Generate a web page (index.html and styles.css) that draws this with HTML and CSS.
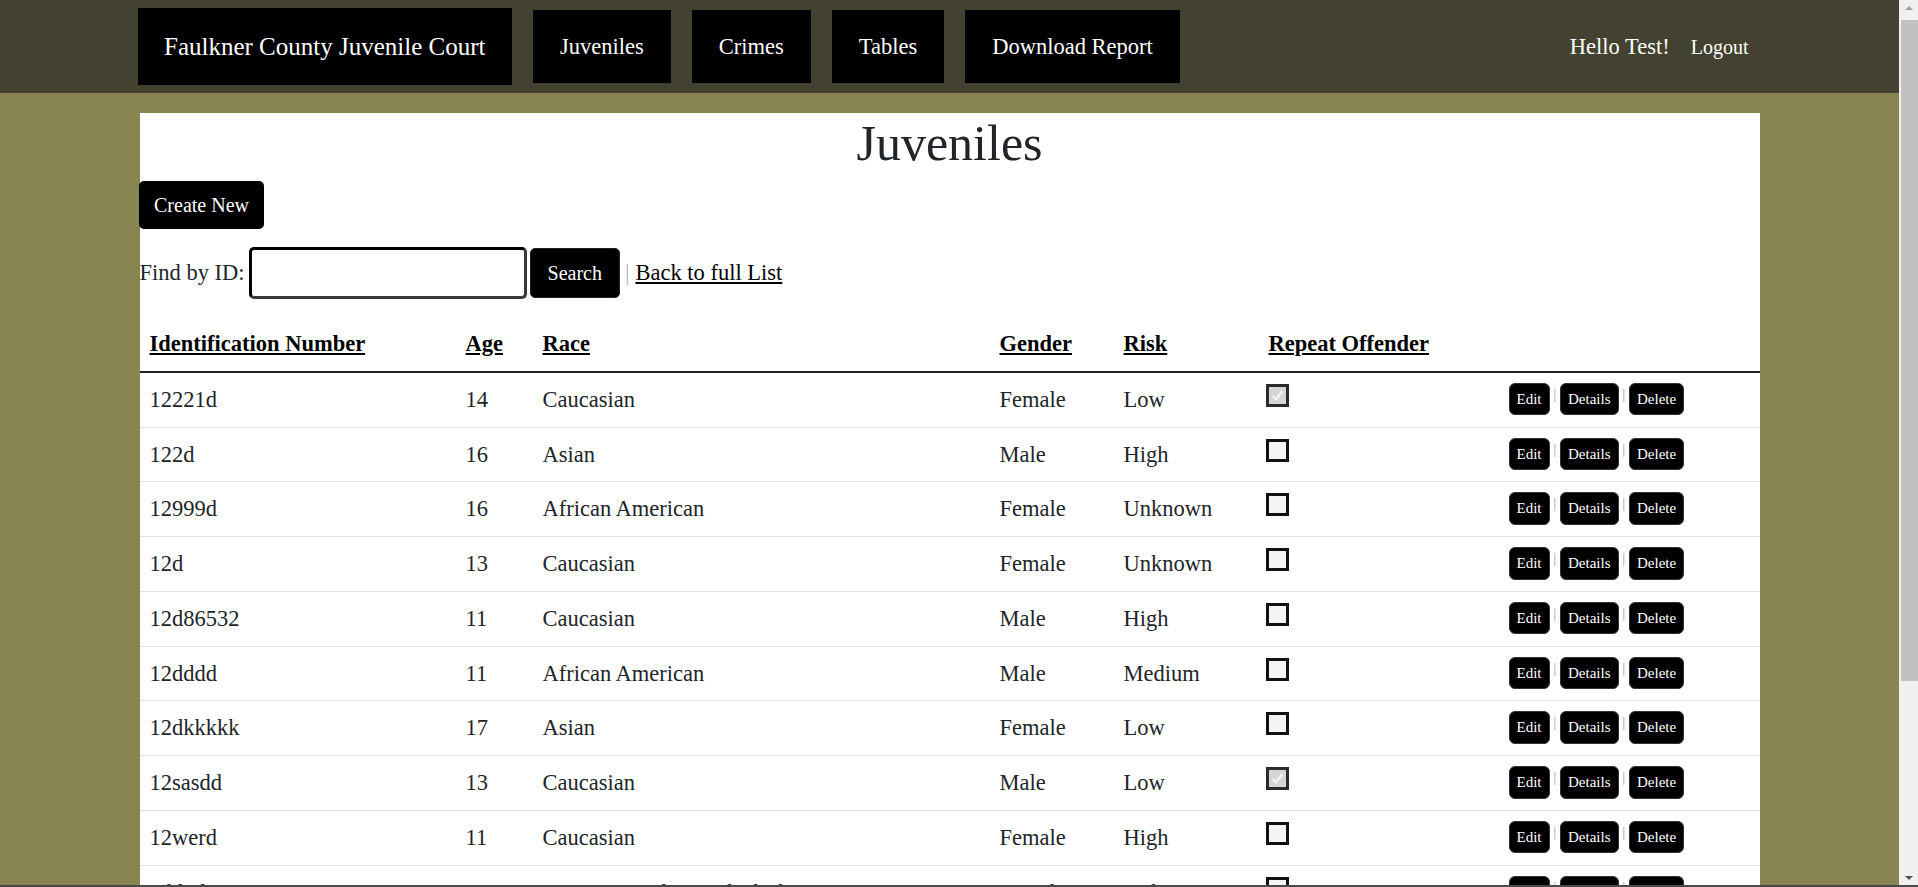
FILE: index.html
```html
<!DOCTYPE html>
<html lang="en">
<head>
<meta charset="utf-8">
<title>Juveniles - Faulkner County Juvenile Court</title>
<link rel="stylesheet" href="styles.css">
</head>
<body>
<header class="navbar">
  <div class="nav-inner">
    <a class="brand" href="#">Faulkner County Juvenile Court</a>
    <nav class="nav-links">
      <a class="nav-item" href="#">Juveniles</a>
      <a class="nav-item" href="#">Crimes</a>
      <a class="nav-item" href="#">Tables</a>
      <a class="nav-item" href="#">Download Report</a>
    </nav>
    <div class="nav-right">
      <span class="hello">Hello Test!</span>
      <button class="logout" type="button">Logout</button>
    </div>
  </div>
</header>

<main class="page">
  <h1 class="title">Juveniles</h1>
  <p class="create-row"><a class="btn-create" href="#">Create New</a></p>
  <form class="find-row">
    <label class="find-label" for="fid">Find by ID:</label>
    <input id="fid" class="find-input" type="text">
    <button class="btn-search" type="button">Search</button>
    <span class="sep-big">|</span>
    <a class="back-link" href="#">Back to full List</a>
  </form>

  <table class="grid">
    <colgroup>
      <col class="c-id"><col class="c-age"><col class="c-race"><col class="c-gender"><col class="c-risk"><col class="c-repeat"><col class="c-actions">
    </colgroup>
    <thead>
      <tr>
        <th><a href="#">Identification Number</a></th>
        <th><a href="#">Age</a></th>
        <th><a href="#">Race</a></th>
        <th><a href="#">Gender</a></th>
        <th><a href="#">Risk</a></th>
        <th><a href="#">Repeat Offender</a></th>
        <th></th>
      </tr>
    </thead>
    <tbody>
      <tr><td>12221d</td><td>14</td><td>Caucasian</td><td>Female</td><td>Low</td><td><span class="cb checked"><svg viewBox="0 0 16 16" class="tick"><path d="M3.5 8.5 L6.5 11.5 L12.5 4" fill="none" stroke="#f4f4f4" stroke-width="2"/></svg></span></td><td class="actions"><a class="btn-sm" href="#">Edit</a> <span class="sep">|</span> <a class="btn-sm" href="#">Details</a> <span class="sep">|</span> <a class="btn-sm" href="#">Delete</a></td></tr>
      <tr><td>122d</td><td>16</td><td>Asian</td><td>Male</td><td>High</td><td><span class="cb"></span></td><td class="actions"><a class="btn-sm" href="#">Edit</a> <span class="sep">|</span> <a class="btn-sm" href="#">Details</a> <span class="sep">|</span> <a class="btn-sm" href="#">Delete</a></td></tr>
      <tr><td>12999d</td><td>16</td><td>African American</td><td>Female</td><td>Unknown</td><td><span class="cb"></span></td><td class="actions"><a class="btn-sm" href="#">Edit</a> <span class="sep">|</span> <a class="btn-sm" href="#">Details</a> <span class="sep">|</span> <a class="btn-sm" href="#">Delete</a></td></tr>
      <tr><td>12d</td><td>13</td><td>Caucasian</td><td>Female</td><td>Unknown</td><td><span class="cb"></span></td><td class="actions"><a class="btn-sm" href="#">Edit</a> <span class="sep">|</span> <a class="btn-sm" href="#">Details</a> <span class="sep">|</span> <a class="btn-sm" href="#">Delete</a></td></tr>
      <tr><td>12d86532</td><td>11</td><td>Caucasian</td><td>Male</td><td>High</td><td><span class="cb"></span></td><td class="actions"><a class="btn-sm" href="#">Edit</a> <span class="sep">|</span> <a class="btn-sm" href="#">Details</a> <span class="sep">|</span> <a class="btn-sm" href="#">Delete</a></td></tr>
      <tr><td>12dddd</td><td>11</td><td>African American</td><td>Male</td><td>Medium</td><td><span class="cb"></span></td><td class="actions"><a class="btn-sm" href="#">Edit</a> <span class="sep">|</span> <a class="btn-sm" href="#">Details</a> <span class="sep">|</span> <a class="btn-sm" href="#">Delete</a></td></tr>
      <tr><td>12dkkkkk</td><td>17</td><td>Asian</td><td>Female</td><td>Low</td><td><span class="cb"></span></td><td class="actions"><a class="btn-sm" href="#">Edit</a> <span class="sep">|</span> <a class="btn-sm" href="#">Details</a> <span class="sep">|</span> <a class="btn-sm" href="#">Delete</a></td></tr>
      <tr><td>12sasdd</td><td>13</td><td>Caucasian</td><td>Male</td><td>Low</td><td><span class="cb checked"><svg viewBox="0 0 16 16" class="tick"><path d="M3.5 8.5 L6.5 11.5 L12.5 4" fill="none" stroke="#f4f4f4" stroke-width="2"/></svg></span></td><td class="actions"><a class="btn-sm" href="#">Edit</a> <span class="sep">|</span> <a class="btn-sm" href="#">Details</a> <span class="sep">|</span> <a class="btn-sm" href="#">Delete</a></td></tr>
      <tr><td>12werd</td><td>11</td><td>Caucasian</td><td>Female</td><td>High</td><td><span class="cb"></span></td><td class="actions"><a class="btn-sm" href="#">Edit</a> <span class="sep">|</span> <a class="btn-sm" href="#">Details</a> <span class="sep">|</span> <a class="btn-sm" href="#">Delete</a></td></tr>
      <tr><td>1dd2d</td><td>18</td><td>American Indian and Alaska Native</td><td>Female</td><td>Unknown</td><td><span class="cb"></span></td><td class="actions"><a class="btn-sm" href="#">Edit</a> <span class="sep">|</span> <a class="btn-sm" href="#">Details</a> <span class="sep">|</span> <a class="btn-sm" href="#">Delete</a></td></tr>
      <tr><td>23abc</td><td>15</td><td>Hispanic</td><td>Male</td><td>Medium</td><td><span class="cb"></span></td><td class="actions"><a class="btn-sm" href="#">Edit</a> <span class="sep">|</span> <a class="btn-sm" href="#">Details</a> <span class="sep">|</span> <a class="btn-sm" href="#">Delete</a></td></tr>
      <tr><td>3452d</td><td>14</td><td>Asian</td><td>Female</td><td>Low</td><td><span class="cb"></span></td><td class="actions"><a class="btn-sm" href="#">Edit</a> <span class="sep">|</span> <a class="btn-sm" href="#">Details</a> <span class="sep">|</span> <a class="btn-sm" href="#">Delete</a></td></tr>
      <tr><td>45tt</td><td>16</td><td>Caucasian</td><td>Male</td><td>High</td><td><span class="cb"></span></td><td class="actions"><a class="btn-sm" href="#">Edit</a> <span class="sep">|</span> <a class="btn-sm" href="#">Details</a> <span class="sep">|</span> <a class="btn-sm" href="#">Delete</a></td></tr>
    </tbody>
  </table>
</main>

<div class="fake-scrollbar" aria-hidden="true">
  <span class="sb-arrow up"></span>
  <span class="sb-thumb"></span>
  <span class="sb-arrow down"></span>
</div>
<div class="frame-edge"></div>
</body>
</html>
```

FILE: styles.css
```css
html {
  scrollbar-width: none;
}
html::-webkit-scrollbar {
  display: none;
}
body {
  margin: 0;
  padding-right: 19px;
  background: #888552;
  font-family: "Liberation Serif", "Times New Roman", serif;
  font-size: 22.5px;
  line-height: 1.5;
  color: #212529;
}
a {
  color: inherit;
}

/* navbar */
.navbar {
  background: #434230;
  height: 93px;
}
.nav-inner {
  width: 1624px;
  height: 93px;
  margin: 0 auto;
  display: flex;
  align-items: center;
  gap: 21px;
}
.brand {
  background: #000;
  color: #fff;
  text-decoration: none;
  font-size: 25px;
  line-height: 37.5px;
  padding: 20px 26.5px;
}
.nav-links {
  display: flex;
  gap: 21px;
}
.nav-item {
  background: #000;
  color: #fff;
  text-decoration: none;
  font-size: 22.5px;
  line-height: 33.75px;
  padding: 20px 27px;
}
.nav-right {
  margin-left: auto;
  display: flex;
  align-items: center;
  gap: 21px;
  padding-right: 13px;
  color: #fff;
}
.hello {
  font-size: 22.5px;
  line-height: 33.75px;
}
.logout {
  background: none;
  border: 0;
  padding: 0;
  color: #fff;
  font-family: inherit;
  font-size: 20px;
  line-height: 30px;
}

/* page */
.page {
  width: 1620px;
  margin: 20px auto 0;
  background: #fff;
  min-height: 1100px;
}
.title {
  margin: 0 0 8px;
  text-align: center;
  font-weight: normal;
  font-size: 50px;
  line-height: 60px;
}
.create-row {
  margin: 0 0 18px;
  line-height: 0;
}
.btn-create {
  display: inline-block;
  background: #000;
  color: #fff;
  text-decoration: none;
  font-size: 20px;
  line-height: 30px;
  padding: 9px 15.5px;
  border-radius: 5px;
  margin-left: -1px;
}
.find-row {
  margin: 0 0 18px;
  display: flex;
  align-items: center;
  height: 52px;
}
.find-label {
  margin-right: 4px;
}
.find-input {
  box-sizing: border-box;
  width: 278px;
  height: 52px;
  border: 3px solid #000;
  border-right-color: #3a3a3a;
  border-bottom-color: #3a3a3a;
  border-radius: 5px;
  font-size: 20px;
  font-family: inherit;
  margin: 0 3px 0 0;
}
.btn-search {
  height: 50px;
  background: #000;
  color: #fff;
  border: 1px solid #222;
  border-radius: 5px;
  font-family: inherit;
  font-size: 20px;
  padding: 0 17px;
}
.sep-big {
  color: #a9b6c4;
  margin: 0 6px 0 5px;
}
.back-link {
  color: #000;
}

/* table */
.grid {
  width: 100%;
  border-collapse: collapse;
  table-layout: fixed;
}
.c-id { width: 316px; }
.c-age { width: 77px; }
.c-race { width: 457px; }
.c-gender { width: 124px; }
.c-risk { width: 145px; }
.c-repeat { width: 240px; }
.c-actions { width: 261px; }
.grid th {
  text-align: left;
  padding: 10px;
  border-bottom: 2px solid #222;
  vertical-align: bottom;
}
.grid th a {
  color: #000;
}
.grid td {
  padding: 10px;
  border-bottom: 1px solid #dee2e6;
  vertical-align: top;
  white-space: nowrap;
}
.cb {
  display: inline-block;
  box-sizing: border-box;
  width: 23px;
  height: 23px;
  border: 3px solid #111;
  background: #f4f4f4;
  margin-left: -3px;
  position: relative;
}
.cb.checked {
  background: #d6d6d6;
  border-color: #2b2b2b;
}
.tick {
  position: absolute;
  left: 0;
  top: 0;
  width: 17px;
  height: 17px;
}
.actions {
  font-size: 15px;
}
.btn-sm {
  display: inline-block;
  background: #000;
  color: #fff;
  text-decoration: none;
  font-size: 15px;
  line-height: 22.5px;
  padding: 4px 7px;
  border: 1px solid #333;
  border-radius: 6px;
  vertical-align: -5px;
}
.sep {
  color: #a8a098;
}

/* simulated browser scrollbar + window edge */
.fake-scrollbar {
  position: fixed;
  top: 0;
  right: 0;
  bottom: 0;
  width: 19px;
  background: #f0f0f0;
}
.sb-thumb {
  position: absolute;
  left: 2px;
  right: 0;
  top: 20px;
  height: 661px;
  background: #c1c1c1;
}
.sb-arrow {
  position: absolute;
  left: 6px;
  width: 0;
  height: 0;
  border-left: 4px solid transparent;
  border-right: 4px solid transparent;
}
.sb-arrow.up {
  top: 6px;
  border-bottom: 4px solid #a3a3a3;
}
.sb-arrow.down {
  bottom: 7px;
  border-top: 4px solid #505050;
}
.frame-edge {
  position: fixed;
  left: 0;
  right: 0;
  bottom: 0;
  height: 2px;
  background: #4a4a4a;
}
```
